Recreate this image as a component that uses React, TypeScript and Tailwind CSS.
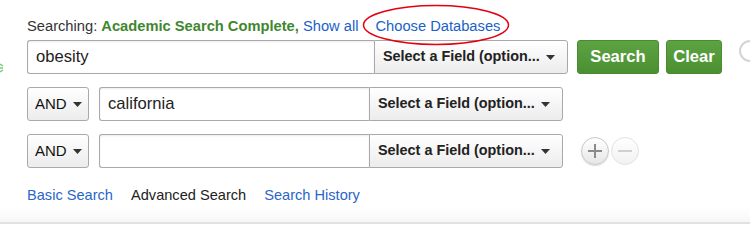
import React from "react";

const Caret = () => (
  <svg width="9" height="5" viewBox="0 0 9 5" className="inline-block">
    <path d="M0 0 L9 0 L4.5 5 Z" fill="#333" />
  </svg>
);

const FieldSelect = ({ w }: { w: string }) => (
  <div
    className={`${w} h-[34px] flex items-center justify-between pl-[8px] pr-[12px] border border-[#a9a9a9] rounded-r-[3px] bg-gradient-to-b from-white to-[#ececec] text-[14.4px] font-bold text-[#222]`}
  >
    <span>Select a Field (option...</span>
    <Caret />
  </div>
);

const AndSelect = () => (
  <div className="w-[62px] h-[34px] flex items-center gap-[6px] pl-[7px] border border-[#a9a9a9] rounded-[3px] bg-gradient-to-b from-white to-[#ececec] text-[15px] text-[#111]">
    <span>AND</span>
    <Caret />
  </div>
);

export default function App() {
  return (
    <div
      className="relative w-[750px] h-[233px] bg-white overflow-hidden"
      style={{ fontFamily: '"Liberation Sans", Arial, sans-serif' }}
    >
      {/* left green mark */}
      <svg className="absolute left-0 top-[63px]" width="4" height="10" viewBox="0 0 4 10">
        <path d="M0 1 L3 3 M0 5 H3 M0 9 L3 7" stroke="#7ccb7c" strokeWidth="1.5" />
      </svg>
      {/* right partial help circle */}
      <div className="absolute left-[739px] top-[40px] w-[22px] h-[22px] rounded-full border-2 border-[#d4d4d4] bg-white" />
      {/* red ellipse annotation */}
      <svg className="absolute left-[362px] top-[4px]" width="148" height="42" viewBox="0 0 148 42">
        <ellipse cx="74" cy="21" rx="72.5" ry="19.5" fill="none" stroke="#e3000f" strokeWidth="1.5" />
      </svg>

      <div className="pl-[27px] pt-[15px]">
        <div className="h-[23px] flex items-center text-[14.7px] text-[#333]">
          <span>Searching:&nbsp;</span>
          <span className="font-bold text-[#3f872e]">Academic Search Complete,</span>
          <span className="text-[#1a5fc8]">&nbsp;Show all</span>
          <span className="text-[#1a5fc8] ml-[17px]">Choose Databases</span>
        </div>

        {/* row 1 */}
        <div className="flex items-center mt-[2px]">
          <div className="w-[347px] h-[34px] flex items-center pl-[8px] border border-r-0 border-[#a9a9a9] rounded-l-[3px] shadow-[inset_0_1px_2px_rgba(0,0,0,0.08)] text-[16.6px] text-[#222]">
            obesity
          </div>
          <FieldSelect w="w-[194px]" />
          <div className="ml-[9px] w-[82px] h-[34px] flex items-center justify-center rounded-[3px] border border-[#4a8a30] bg-gradient-to-b from-[#5ea343] to-[#4a9030] text-white font-bold text-[16.6px]">
            Search
          </div>
          <div className="ml-[7px] w-[56px] h-[34px] flex items-center justify-center rounded-[3px] border border-[#4a8a30] bg-gradient-to-b from-[#5ea343] to-[#4a9030] text-white font-bold text-[16.6px]">
            Clear
          </div>
        </div>

        {/* row 2 */}
        <div className="flex items-center mt-[13px]">
          <AndSelect />
          <div className="ml-[10px] w-[270px] h-[34px] flex items-center pl-[8px] border border-r-0 border-[#a9a9a9] rounded-l-[3px] shadow-[inset_0_1px_2px_rgba(0,0,0,0.08)] text-[16.6px] text-[#222]">
            california
          </div>
          <FieldSelect w="w-[194px]" />
        </div>

        {/* row 3 */}
        <div className="flex items-center mt-[13px]">
          <AndSelect />
          <div className="ml-[10px] w-[270px] h-[34px] border border-r-0 border-[#a9a9a9] rounded-l-[3px] shadow-[inset_0_1px_2px_rgba(0,0,0,0.08)]" />
          <FieldSelect w="w-[194px]" />
          <div className="ml-[18px] w-[28px] h-[28px] rounded-full border border-[#c8c8c8] bg-gradient-to-b from-white to-[#e6e6e6] shadow-[0_1px_1px_rgba(0,0,0,0.15)] flex items-center justify-center">
            <svg width="16" height="16" viewBox="0 0 16 16">
              <path d="M8 1 V15 M1 8 H15" stroke="#8a8a8a" strokeWidth="2" />
            </svg>
          </div>
          <div className="ml-[2px] w-[28px] h-[28px] rounded-full border border-[#e2e2e2] bg-gradient-to-b from-white to-[#f2f2f2] flex items-center justify-center">
            <svg width="16" height="16" viewBox="0 0 16 16">
              <path d="M1 8 H15" stroke="#d0d0d0" strokeWidth="2" />
            </svg>
          </div>
        </div>

        {/* links */}
        <div className="flex items-center mt-[18px] h-[20px] text-[14.6px]">
          <span className="text-[#2a66c9]">Basic Search</span>
          <span className="ml-[18px] text-[#222]">Advanced Search</span>
          <span className="ml-[18px] text-[#2a66c9]">Search History</span>
        </div>
      </div>

      {/* bottom gradient and line */}
      <div className="absolute left-0 top-[208px] w-full h-[14px] bg-gradient-to-b from-white to-[#f7f7f7]" />
      <div className="absolute left-0 top-[222px] w-full h-[2px] bg-[#e2e2e2]" />
    </div>
  );
}
